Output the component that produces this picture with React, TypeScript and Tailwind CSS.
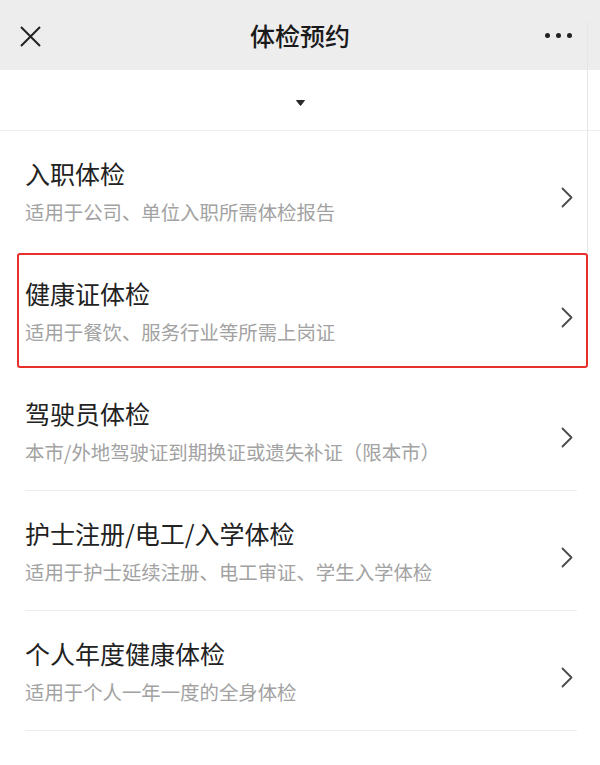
// 体检预约：顶部导航 + 体检类型列表
const items = [
  { title: '入职体检', desc: '适用于公司、单位入职所需体检报告', line: false },
  { title: '健康证体检', desc: '适用于餐饮、服务行业等所需上岗证', line: false, marked: true },
  { title: '驾驶员体检', desc: '本市/外地驾驶证到期换证或遗失补证（限本市）', line: true },
  { title: '护士注册/电工/入学体检', desc: '适用于护士延续注册、电工审证、学生入学体检', line: true },
  { title: '个人年度健康体检', desc: '适用于个人一年一度的全身体检', line: true },
]

function Chevron() {
  return (
    <svg width="12" height="21" viewBox="0 0 12 21" fill="none">
      <polyline
        points="1.5,1.5 10.5,10.5 1.5,19.5"
        stroke="#4a4a4a"
        strokeWidth="1.8"
        strokeLinecap="round"
        strokeLinejoin="round"
      />
    </svg>
  )
}

function Item({ title, desc, line, marked }: { title: string; desc: string; line: boolean; marked?: boolean }) {
  return (
    <div className="relative">
      <div
        className={`mr-[23px] ml-[25px] flex h-[120px] items-start justify-between ${line ? 'border-b border-[#ececec]' : ''}`}
      >
        <div className="pt-[26px]">
          <div className="text-[25px] leading-[32px] text-[#222]">{title}</div>
          <div className="mt-[10px] text-[19.4px] leading-[26px] text-[#a2a2a2]">{desc}</div>
        </div>
        <div className="mt-[56px] mr-[4px]">
          <Chevron />
        </div>
      </div>
      {/* 红框标注 */}
      {marked && (
        <div className="pointer-events-none absolute top-[2px] right-[12px] bottom-[3px] left-[17px] rounded-[3px] border-[2.5px] border-[#e8302a]" />
      )}
    </div>
  )
}

export default function App() {
  return (
    <div
      className="relative min-h-[765px] w-full bg-white"
      style={{ fontFamily: '"Noto Sans CJK SC", "Noto Sans", sans-serif' }}
    >
      {/* 顶部导航 */}
      <header className="grid h-[70px] grid-cols-[1fr_auto_1fr] items-center bg-[#ededed]">
        <div className="pl-[20px] pt-[2px]">
          <svg width="21" height="21" viewBox="0 0 21 21" fill="none">
            <path d="M1 1L20 20M20 1L1 20" stroke="#222" strokeWidth="2" />
          </svg>
        </div>
        <h1 className="text-[25px] leading-none font-medium text-[#1a1a1a]">体检预约</h1>
        <div className="flex justify-end gap-[6px] pr-[28px]">
          <span className="h-[5px] w-[5px] rounded-full bg-[#222]" />
          <span className="h-[5px] w-[5px] rounded-full bg-[#222]" />
          <span className="h-[5px] w-[5px] rounded-full bg-[#222]" />
        </div>
      </header>

      {/* 下拉提示 */}
      <div className="flex h-[61px] items-center justify-center border-b border-[#efefef] pt-[5px]">
        <svg width="9" height="6" viewBox="0 0 9 6">
          <path d="M0.5 0.5H8.5L4.5 5.5Z" fill="#2a2a2a" stroke="#2a2a2a" strokeLinejoin="round" />
        </svg>
      </div>

      <div>
        {items.map((it) => (
          <Item key={it.title} {...it} />
        ))}
      </div>

      {/* 右侧浅色卡片边缘 */}
      <div className="pointer-events-none absolute top-[22px] right-[9px] h-[230px] w-[4px] rounded-tl-[6px] border-t border-l border-[#e6e6e6]" />
    </div>
  )
}
